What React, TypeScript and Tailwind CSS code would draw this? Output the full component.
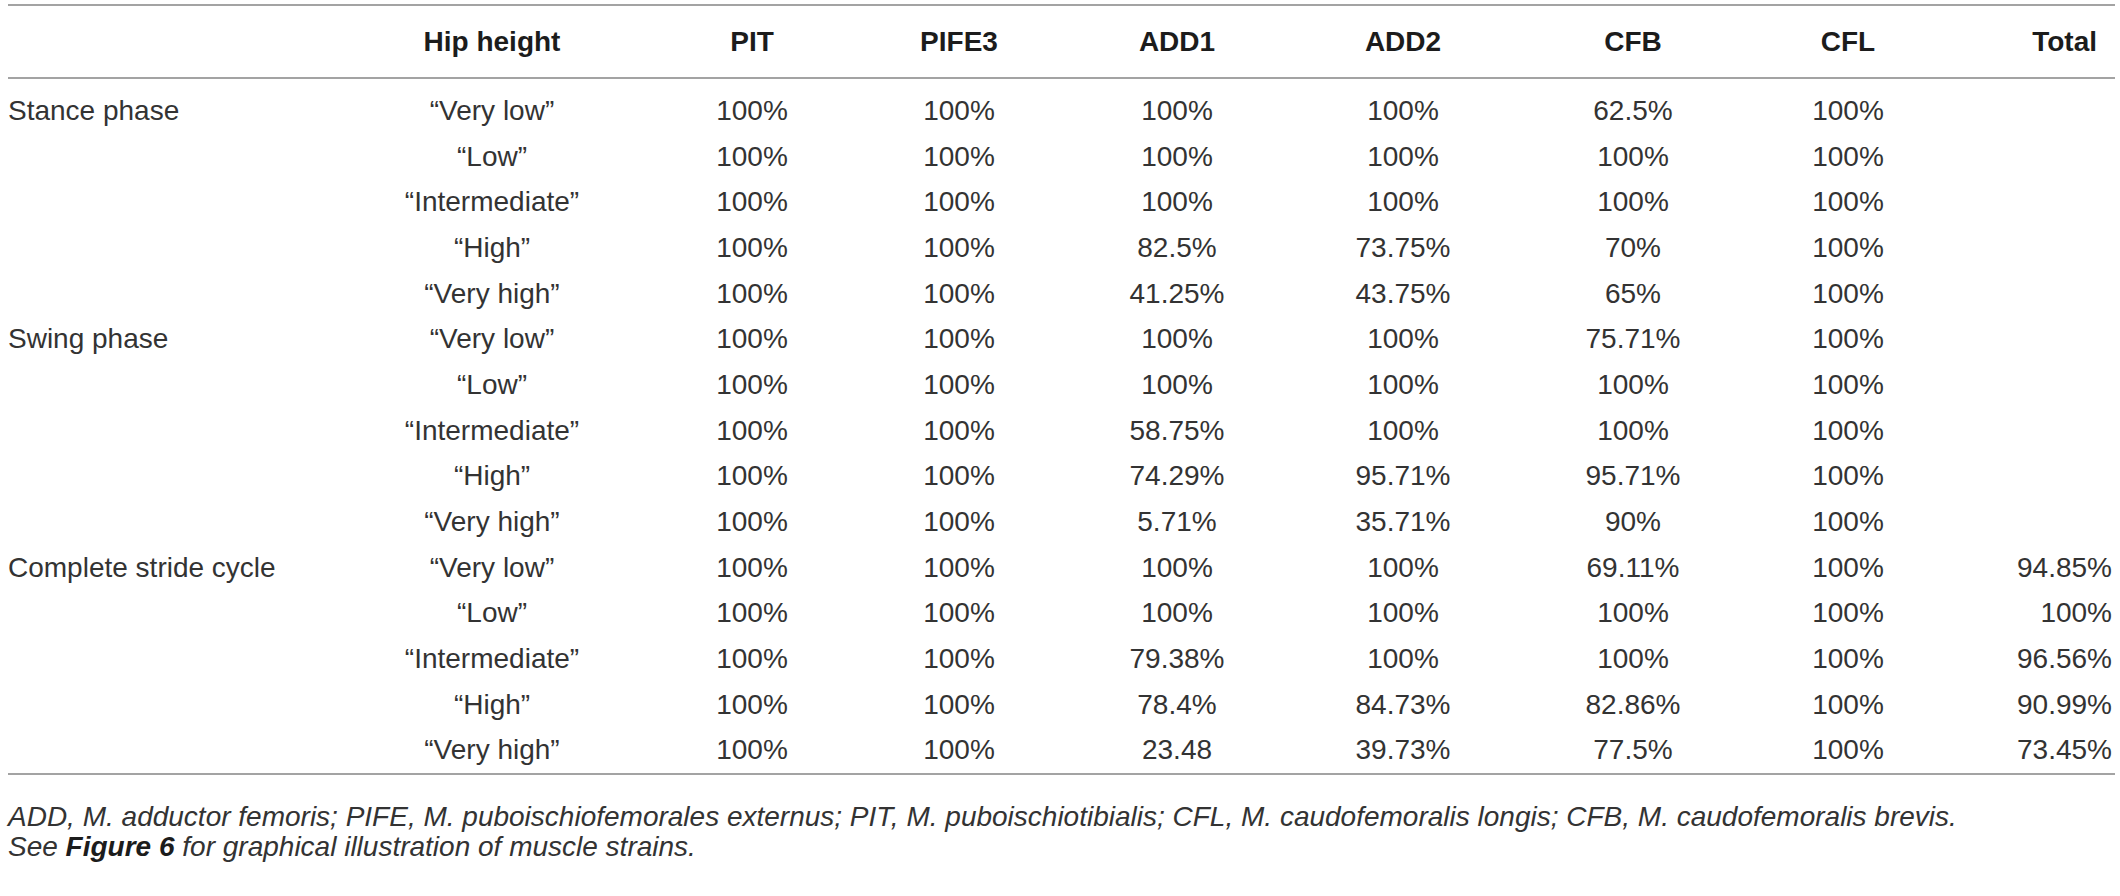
import React from 'react';

type Row = { group?: string; hip: string; vals: string[]; total?: string };

const rows: Row[] = [
  { group: 'Stance phase', hip: '“Very low”', vals: ['100%', '100%', '100%', '100%', '62.5%', '100%'] },
  { hip: '“Low”', vals: ['100%', '100%', '100%', '100%', '100%', '100%'] },
  { hip: '“Intermediate”', vals: ['100%', '100%', '100%', '100%', '100%', '100%'] },
  { hip: '“High”', vals: ['100%', '100%', '82.5%', '73.75%', '70%', '100%'] },
  { hip: '“Very high”', vals: ['100%', '100%', '41.25%', '43.75%', '65%', '100%'] },
  { group: 'Swing phase', hip: '“Very low”', vals: ['100%', '100%', '100%', '100%', '75.71%', '100%'] },
  { hip: '“Low”', vals: ['100%', '100%', '100%', '100%', '100%', '100%'] },
  { hip: '“Intermediate”', vals: ['100%', '100%', '58.75%', '100%', '100%', '100%'] },
  { hip: '“High”', vals: ['100%', '100%', '74.29%', '95.71%', '95.71%', '100%'] },
  { hip: '“Very high”', vals: ['100%', '100%', '5.71%', '35.71%', '90%', '100%'] },
  { group: 'Complete stride cycle', hip: '“Very low”', vals: ['100%', '100%', '100%', '100%', '69.11%', '100%'], total: '94.85%' },
  { hip: '“Low”', vals: ['100%', '100%', '100%', '100%', '100%', '100%'], total: '100%' },
  { hip: '“Intermediate”', vals: ['100%', '100%', '79.38%', '100%', '100%', '100%'], total: '96.56%' },
  { hip: '“High”', vals: ['100%', '100%', '78.4%', '84.73%', '82.86%', '100%'], total: '90.99%' },
  { hip: '“Very high”', vals: ['100%', '100%', '23.48', '39.73%', '77.5%', '100%'], total: '73.45%' },
];

const heads = ['PIT', 'PIFE3', 'ADD1', 'ADD2', 'CFB', 'CFL'];

// column template tuned so every centred column sits where the original one does
const cols = 'grid grid-cols-[354px_260px_260px_154px_282px_170px_290px_140px_194px]';

export default function App() {
  return (
    <div className="bg-white w-[2120px] h-[896px] pl-[8px] pr-[5px] pt-[4px] font-['Liberation_Sans',Arial,sans-serif] text-[28px] text-[#333]">
      <div className="border-t-2 border-b-2 border-[#a3a3a3]">
        <div className={`${cols} h-[71px] items-center font-bold text-[#1c1c1c]`}>
          <div />
          <div className="text-center">Hip height</div>
          {heads.map((h) => (
            <div key={h} className="text-center">{h}</div>
          ))}
          <div className="text-right pr-[15px]">Total</div>
        </div>
      </div>
      <div className="pt-[9px] border-b-2 border-[#a3a3a3]">
        {rows.map((r, i) => (
          <div key={i} className={`${cols} h-[45.7px] items-center leading-none`}>
            <div>{r.group ?? ''}</div>
            <div className="text-center">{r.hip}</div>
            {r.vals.map((v, j) => (
              <div key={j} className="text-center">{v}</div>
            ))}
            <div className="text-right">{r.total ?? ''}</div>
          </div>
        ))}
      </div>
      <div className="pt-[27px] italic text-[28px] leading-[30px] text-[#333]">
        <p>
          ADD, M. adductor femoris; PIFE, M. puboischiofemorales externus; PIT, M. puboischiotibialis; CFL, M.
          caudofemoralis longis; CFB, M. caudofemoralis brevis.
        </p>
        <p>
          See <span className="font-bold text-[#1c1c1c]">Figure 6</span> for graphical illustration of muscle strains.
        </p>
      </div>
    </div>
  );
}
